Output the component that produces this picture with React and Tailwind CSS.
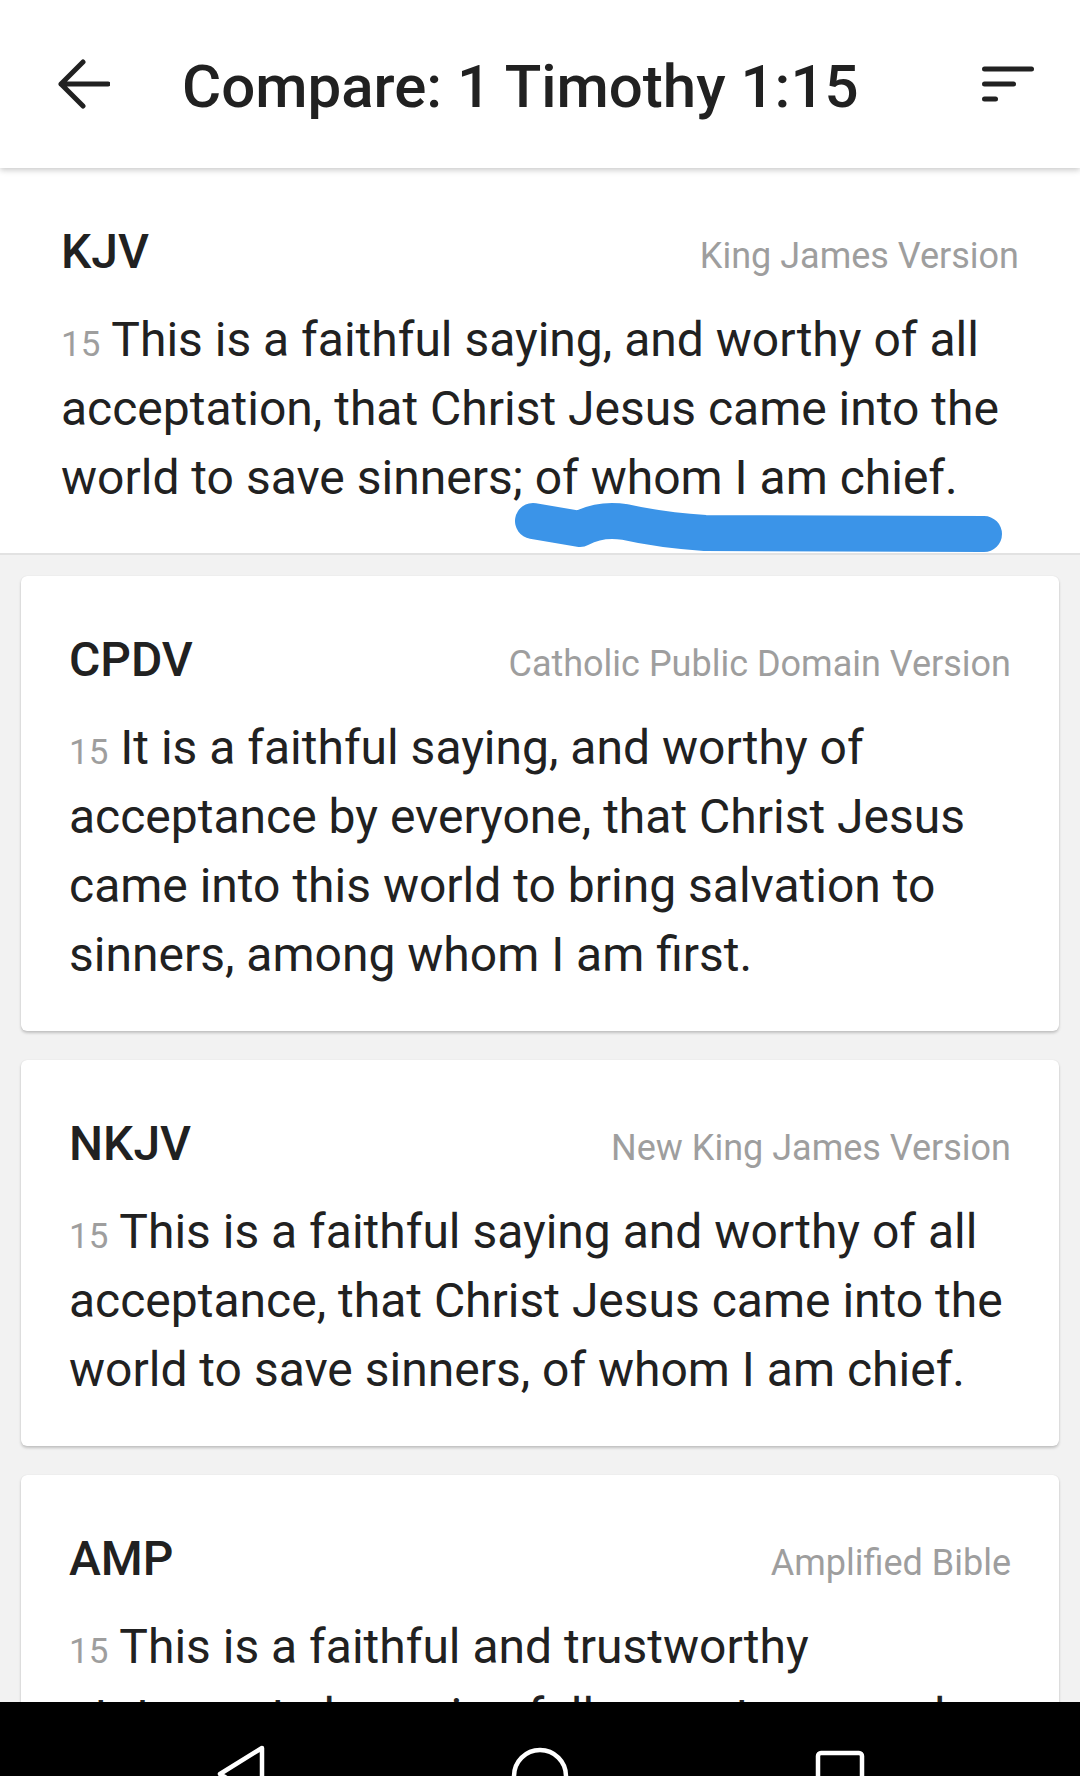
import React from "react";

function Header() {
  return (
    <div className="relative z-10 flex h-[168px] shrink-0 items-center bg-white shadow-[0_2px_6px_rgba(0,0,0,0.22)]">
      <svg width="52" height="52" viewBox="0 0 52 52" className="ml-[58px] shrink-0">
        <path d="M3 26 H50 M25 4 L3 26 L25 48" fill="none" stroke="#212121" strokeWidth="5" strokeLinecap="round" strokeLinejoin="round" />
      </svg>
      <div className="ml-[72px] flex-1 pt-[5px] text-[60px] font-medium leading-[72px] text-[#212121]">
        Compare: 1 Timothy 1:15
      </div>
      <svg width="60" height="40" viewBox="0 0 60 40" className="mr-[42px] shrink-0">
        <g stroke="#212121" strokeWidth="5" strokeLinecap="round">
          <path d="M6.5 5 H53.5" />
          <path d="M6.5 20 H35.5" />
          <path d="M6.5 35 H17.5" />
        </g>
      </svg>
    </div>
  );
}

function VersionHead({ abbr, name }) {
  return (
    <div className="flex items-baseline justify-between leading-[56px]">
      <span className="text-[48px] font-medium text-[#212121]">{abbr}</span>
      <span className="text-[36px] leading-none text-[#9e9e9e]">{name}</span>
    </div>
  );
}

function Verse({ children }) {
  return (
    <p className="mt-[25px] text-[48px] leading-[69px] text-[#212121]">
      <span className="text-[35px] leading-none text-[#9e9e9e]">15</span> {children}
    </p>
  );
}

function Card({ abbr, name, text }) {
  return (
    <div className="shrink-0 rounded-[6px] bg-white px-[48px] pb-[42px] pt-[56px] shadow-[0_0_1px_rgba(0,0,0,0.12),0_2px_3px_rgba(0,0,0,0.2)]">
      <VersionHead abbr={abbr} name={name} />
      <Verse>{text}</Verse>
    </div>
  );
}

function NavBar() {
  return (
    <div className="flex h-[74px] shrink-0 items-start justify-center overflow-hidden bg-black">
      <div className="flex w-[300px] justify-center pt-[40px]">
        <svg width="56" height="64" viewBox="0 0 56 64">
          <path d="M50 6 L8 32 L50 58 Z" fill="none" stroke="#ffffff" strokeWidth="4.5" strokeLinejoin="round" />
        </svg>
      </div>
      <div className="flex w-[300px] justify-center pt-[42px]">
        <svg width="64" height="64" viewBox="0 0 64 64">
          <circle cx="32" cy="32" r="26" fill="none" stroke="#ffffff" strokeWidth="4.5" />
        </svg>
      </div>
      <div className="flex w-[300px] justify-center pt-[45px]">
        <svg width="56" height="56" viewBox="0 0 56 56">
          <rect x="6" y="6" width="44" height="44" rx="3" fill="none" stroke="#ffffff" strokeWidth="4.5" />
        </svg>
      </div>
    </div>
  );
}

export default function App() {
  return (
    <div
      className="flex h-[1776px] w-[1080px] flex-col overflow-hidden bg-[#f2f2f2]"
      style={{ fontFamily: "Roboto, 'Noto Sans', 'Liberation Sans', sans-serif" }}
    >
      <Header />
      <div className="flex min-h-0 flex-1 flex-col overflow-hidden">
        <div className="relative shrink-0 border-b-2 border-[#e2e2e2] bg-white px-[61px] pb-[41px] pt-[56px]">
          <VersionHead abbr="KJV" name="King James Version" />
          <Verse>
            This is a faithful saying, and worthy of all acceptation, that Christ Jesus came into the world to save sinners; of whom I am chief.
          </Verse>
          <svg className="pointer-events-none absolute left-0 top-0" width="1080" height="390" viewBox="0 0 1080 390">
            <path
              d="M533 353 Q 557 357, 580 361 Q 600 350, 625 354 Q 660 362, 705 365 L 984 366"
              fill="none"
              stroke="#3b94e8"
              strokeWidth="36"
              strokeLinecap="round"
              strokeLinejoin="round"
            />
          </svg>
        </div>
        <div className="flex flex-col gap-[29px] px-[21px] pt-[21px]">
          <Card
            abbr="CPDV"
            name="Catholic Public Domain Version"
            text="It is a faithful saying, and worthy of acceptance by everyone, that Christ Jesus came into this world to bring salvation to sinners, among whom I am first."
          />
          <Card
            abbr="NKJV"
            name="New King James Version"
            text="This is a faithful saying and worthy of all acceptance, that Christ Jesus came into the world to save sinners, of whom I am chief."
          />
          <Card
            abbr="AMP"
            name="Amplified Bible"
            text="This is a faithful and trustworthy statement, deserving full acceptance and approval, that Christ Jesus came into the world to save sinners, among whom I am foremost."
          />
        </div>
      </div>
      <NavBar />
    </div>
  );
}
